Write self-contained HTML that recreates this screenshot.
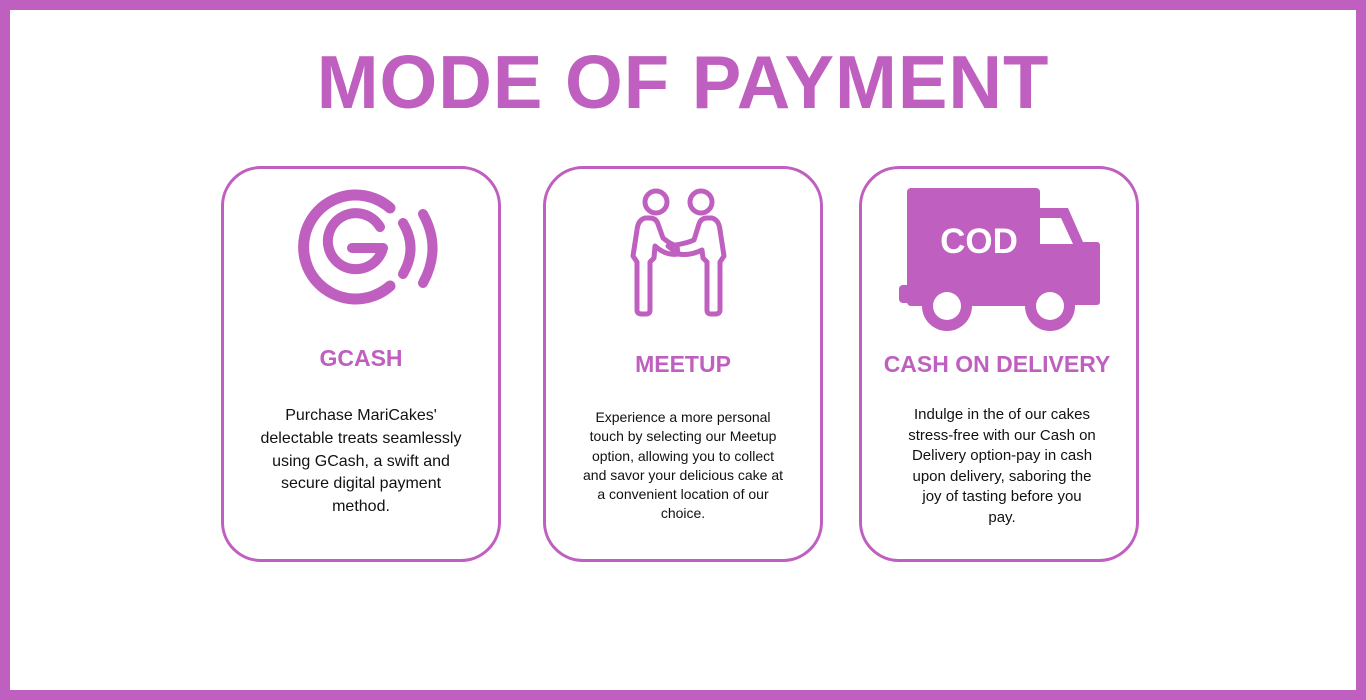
<!DOCTYPE html>
<html><head><meta charset="utf-8"><style>
*{margin:0;padding:0;box-sizing:border-box}
body{width:1366px;height:700px;background:#fff;position:relative;overflow:hidden;font-family:"Liberation Sans",sans-serif;color:#111}
.frame{position:absolute;left:0;top:0;width:1366px;height:700px;border:10px solid #BF5FBF}
.title{position:absolute;left:0;width:1366px;top:45px;text-align:center;color:#BF5FBF;font-weight:bold;font-size:75px;line-height:75px}
.title span{display:inline-block;transform:scaleX(0.99);letter-spacing:1px}
.card{position:absolute;top:166px;width:280px;height:396px;border:3px solid #BF5FBF;border-radius:40px}
.h{position:absolute;left:0;width:100%;text-align:center;color:#BF5FBF;font-weight:bold;font-size:23px}
.t{position:absolute;text-align:center;color:#111}
svg{position:absolute}
</style></head><body>
<div class="frame"></div>
<div class="title"><span>MODE OF PAYMENT</span></div>

<div class="card" style="left:221px"></div>
<div class="card" style="left:543px"></div>
<div class="card" style="left:859px"></div>

<svg width="1366" height="700" style="left:0;top:0" fill="none" stroke="#BF5FBF" stroke-linecap="round">
 <!-- GCash -->
 <path d="M390 208 A52 52 0 1 0 390 286" stroke-width="11"/>
 <path d="M380 227 A28 28 0 1 0 383 248 L352 248" stroke-width="10" stroke-linejoin="round"/>
 <path d="M403 223 Q418 248 403 274" stroke-width="10"/>
 <path d="M423 214 Q442 248 423 283" stroke-width="10"/>
 <!-- Meetup -->
 <circle cx="656" cy="202" r="11" stroke-width="5"/>
 <circle cx="701" cy="202" r="11" stroke-width="5"/>
 <path d="M645 218 Q638 220 637 230 L633 256 L637 262 L637 310 Q637 314 642 314 L646 314 Q650 314 650 310 L650 262 L654 258 L655 246 Q666 256 678 254 L677 246 Q670 244 663 238 L658 224 Q656 218 650 218 Z" stroke-width="5" stroke-linejoin="round"/>
 <path d="M712 218 Q719 220 720 230 L724 256 L720 262 L720 310 Q720 314 715 314 L711 314 Q707 314 707 310 L707 262 L703 258 L702 250 Q690 256 678 254 L668 246 Q685 244 694 240 L699 224 Q701 218 707 218 Z" stroke-width="5" stroke-linejoin="round"/>
</svg>
<svg width="1366" height="700" style="left:0;top:0">
 <g fill="#BF5FBF">
  <rect x="907" y="188" width="133" height="118" rx="4"/>
  <path d="M1036 208 L1068 208 L1083 242 L1097 242 Q1100 242 1100 246 L1100 302 Q1100 305 1096 305 L1030 305 Z"/>
  <rect x="899" y="285" width="30" height="18" rx="4"/>
  <circle cx="947" cy="306" r="25"/>
  <circle cx="1050" cy="306" r="25"/>
 </g>
 <path d="M1040 218 L1061 218 L1073 244 L1040 244 Z" fill="#fff"/>
 <circle cx="947" cy="306" r="14" fill="#fff"/>
 <circle cx="1050" cy="306" r="14" fill="#fff"/>
 <text x="979" y="253" text-anchor="middle" fill="#fff" font-family="Liberation Sans" font-weight="bold" font-size="35">COD</text>
</svg>

<div class="h" style="left:221px;width:280px;top:345px">GCASH</div>
<div class="h" style="left:543px;width:280px;top:351px">MEETUP</div>
<div class="h" style="left:857px;width:280px;top:351px">CASH ON DELIVERY</div>

<div class="t" style="left:221px;width:280px;top:405px;font-size:16px;line-height:22.8px">Purchase MariCakes'<br>delectable treats seamlessly<br>using GCash, a swift and<br>secure digital payment<br>method.</div>
<div class="t" style="left:543px;width:280px;top:408px;font-size:14px;line-height:19.3px">Experience a more personal<br>touch by selecting our Meetup<br>option, allowing you to collect<br>and savor your delicious cake at<br>a convenient location of our<br>choice.</div>
<div class="t" style="left:862px;width:280px;top:405px;font-size:15px;line-height:20.6px">Indulge in the of our cakes<br>stress-free with our Cash on<br>Delivery option-pay in cash<br>upon delivery, saboring the<br>joy of tasting before you<br>pay.</div>
</body></html>
